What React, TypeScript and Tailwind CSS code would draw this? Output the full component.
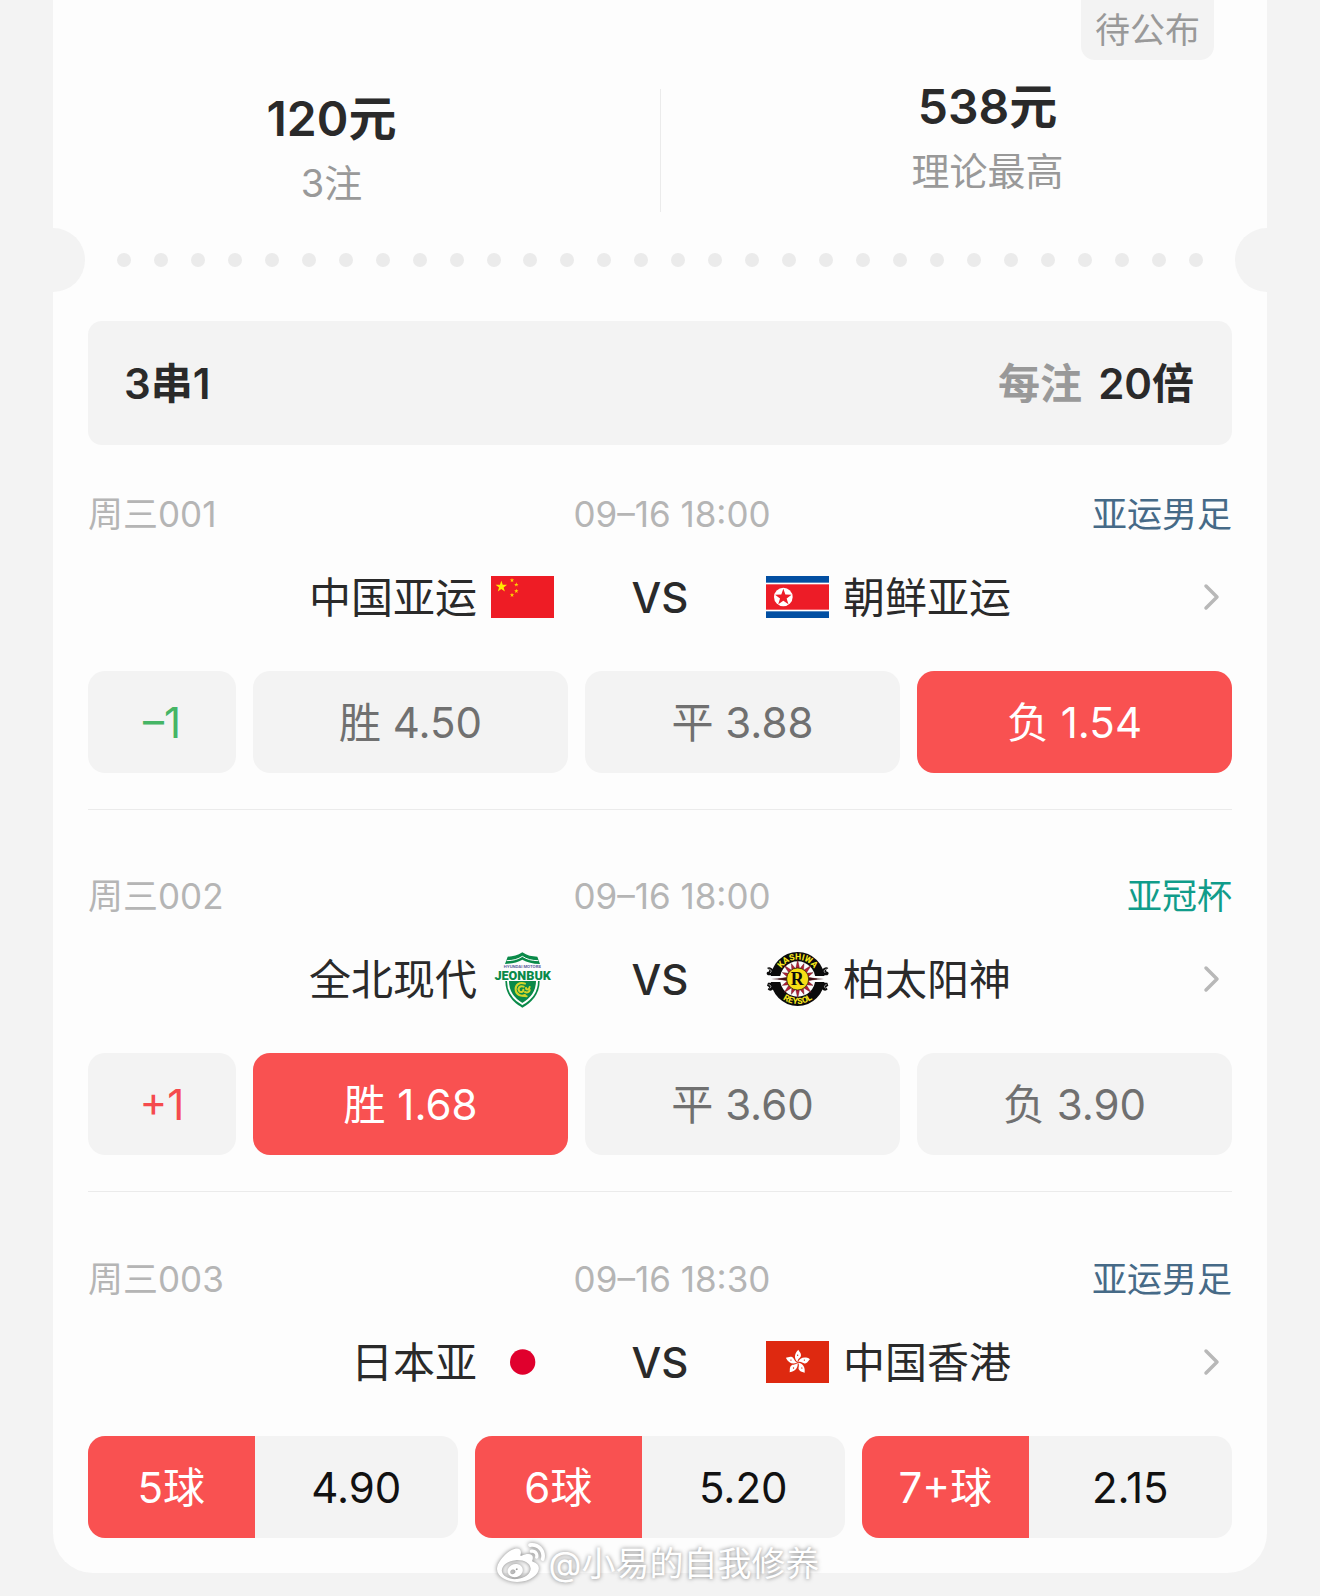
import type { ReactNode } from 'react';
import { FaWeibo } from 'react-icons/fa';
import clsx from 'clsx';

interface Team {
  name: string;
  logo: ReactNode;
}

interface Option {
  label: string;
  odds: string;
  selected?: boolean;
}

interface Match {
  id: string;
  time: string;
  league: string;
  leagueColor: string;
  home: Team;
  away: Team;
  handicap?: string;
  options: Option[];
}

function starPoints(cx: number, cy: number, r: number) {
  const points: string[] = [];
  for (let i = 0; i < 10; i++) {
    const radius = i % 2 === 0 ? r : r * 0.4;
    const angle = (Math.PI / 5) * i - Math.PI / 2;
    points.push(`${cx + radius * Math.cos(angle)},${cy + radius * Math.sin(angle)}`);
  }
  return points.join(' ');
}

function ChinaFlag() {
  return (
    <svg viewBox="0 0 189 126" className="h-[42px] w-[63px] shrink-0" aria-hidden="true">
      <rect width="189" height="126" fill="#ee1c25" />
      <polygon points={starPoints(31, 32, 18)} fill="#ffea00" />
      <polygon points={starPoints(63, 13, 7)} fill="#ffd400" />
      <polygon points={starPoints(76, 26, 7)} fill="#ffd400" />
      <polygon points={starPoints(76, 45, 7)} fill="#ffd400" />
      <polygon points={starPoints(63, 57, 7)} fill="#ffd400" />
    </svg>
  );
}

function NorthKoreaFlag() {
  return (
    <svg viewBox="0 0 189 126" className="h-[42px] w-[63px] shrink-0" aria-hidden="true">
      <rect width="189" height="126" fill="#024fa2" />
      <rect y="20" width="189" height="86" fill="#fff" />
      <rect y="25" width="189" height="76" fill="#ed1c27" />
      <circle cx="52" cy="63" r="28" fill="#fff" />
      <polygon points={starPoints(52, 64, 26)} fill="#ed1c27" />
    </svg>
  );
}

function JapanFlag() {
  return (
    <svg viewBox="0 0 189 126" className="h-[42px] w-[63px] shrink-0" aria-hidden="true">
      <rect width="189" height="126" fill="#fdfdfd" />
      <circle cx="95" cy="63" r="38" fill="#e0002d" />
    </svg>
  );
}

function HongKongFlag() {
  return (
    <svg viewBox="0 0 189 126" className="h-[42px] w-[63px] shrink-0" aria-hidden="true">
      <rect width="189" height="126" fill="#de2910" />
      {[8, 80, 152, 224, 296].map(angle => (
        <g key={angle} transform={`translate(95 64) rotate(${angle})`}>
          <path d="M0 -1C-12 -8 -15 -24 -3 -38C-1 -33 7 -30 7 -21C7 -14 -3 -10 0 -1Z" fill="#fff" />
          <circle cx="-3" cy="-21" r="2" fill="#de2910" />
        </g>
      ))}
    </svg>
  );
}

function JeonbukCrest() {
  return (
    <svg viewBox="33 25 189 189" className="size-[63px] shrink-0" aria-hidden="true">
      <path d="M127 38C113 48 99 51 83 51L75 73C96 72 113 68 127 60C141 68 158 72 180 73L172 51C156 51 141 48 127 38Z" fill="#0a8a49" />
      <path d="M80 63C99 63 114 59 127 50C140 59 156 63 175 63" fill="none" stroke="#fff" strokeWidth="3" />
      <text x="127" y="84" textAnchor="middle" fontSize="12" fontWeight="700" fill="#5b5c9b">HYUNDAI MOTORS</text>
      <path d="M76 124C76 165 101 190 127 204C153 190 179 165 179 124Z" fill="#0a8a49" />
      <path d="M84 124C84 160 104 180 127 193C150 180 171 160 171 124" fill="none" stroke="#fff" strokeWidth="6" />
      <text x="128" y="121" textAnchor="middle" fontSize="38" fontWeight="900" fill="#0a8a49" stroke="#fff" strokeWidth="4" paintOrder="stroke" className="font-['Roboto',sans-serif]">JEONBUK</text>
      <g fill="none" stroke="#d3d42a" strokeLinecap="round" strokeWidth="6">
        <path d="M135 132C119 125 105 136 107 151C109 166 124 171 135 166" />
        <path d="M131 141C119 137 113 146 117 153C121 160 131 158 130 150" />
        <path d="M138 145C137 151 148 151 149 142M135 157C142 160 148 157 149 151M129 168L140 170" />
      </g>
    </svg>
  );
}

function KashiwaCrest() {
  const rays = Array.from({ length: 16 }, (_, i) => i * 22.5);
  return (
    <svg viewBox="858 25 189 189" className="size-[63px] shrink-0" aria-hidden="true">
      <defs>
        <path id="crest-top" d="M895 118A58 58 0 0 1 1011 118" />
        <path id="crest-bottom" d="M878 118A75 75 0 0 0 1028 118" />
      </defs>
      <circle cx="953" cy="118" r="81" fill="#0b0b0b" />
      <circle cx="953" cy="118" r="53" fill="#fdfdfd" />
      <path d="M862 109L912 109L912 127L862 127ZM1044 109L994 109L994 127L1044 127Z" fill="#fdfdfd" />
      <g fill="#0b0b0b">
        <path d="M861 85C867 80 874 83 880 91L890 107L864 107C858 102 859 96 866 96L868 91Z" />
        <path d="M1045 85C1039 80 1032 83 1026 91L1016 107L1042 107C1048 102 1047 96 1040 96L1038 91Z" />
        <path d="M864 129L890 129L880 147C875 155 867 154 863 149L868 143L861 138Z" />
        <path d="M1042 129L1016 129L1026 147C1031 155 1039 154 1043 149L1038 143L1045 138Z" />
      </g>
      <g fill="none" stroke="#fdfdfd" strokeWidth="2">
        <path d="M866 88C874 90 876 95 870 100M866 135C873 136 875 142 869 146" />
        <path d="M1040 88C1032 90 1030 95 1036 100M1040 135C1033 136 1031 142 1037 146" />
      </g>
      {rays.map((angle, i) => (
        <path
          key={angle}
          d={i % 2 === 0 ? 'M-6 -31L0 -58L6 -31Z' : 'M-6 -31L0 -50L6 -31Z'}
          fill="#b51f35"
          stroke="#3c1014"
          strokeWidth="1"
          transform={`translate(953 118) rotate(${angle})`}
        />
      ))}
      <path d="M922 114L874 118L922 122ZM984 114L1032 118L984 122Z" fill="#3c1014" />
      <circle cx="953" cy="118" r="33" fill="#f7df16" stroke="#0b0b0b" strokeWidth="2" />
      <text x="952" y="136" textAnchor="middle" fontSize="54" fontWeight="700" fill="#0b0b0b" className="font-['Liberation_Serif',serif]">R</text>
      <g fill="#f7e61c" fontSize="26" fontWeight="800" className="font-['Roboto',sans-serif]">
        <text textAnchor="middle">
          <textPath href="#crest-top" startOffset="50%">KASHIWA</textPath>
        </text>
        <text textAnchor="middle">
          <textPath href="#crest-bottom" startOffset="50%">REYSOL</textPath>
        </text>
      </g>
    </svg>
  );
}

const matches: Match[] = [
  {
    id: '周三001',
    time: '09–16 18:00',
    league: '亚运男足',
    leagueColor: 'text-[#466a87]',
    home: { name: '中国亚运', logo: <ChinaFlag /> },
    away: { name: '朝鲜亚运', logo: <NorthKoreaFlag /> },
    handicap: '–1',
    options: [
      { label: '胜', odds: '4.50' },
      { label: '平', odds: '3.88' },
      { label: '负', odds: '1.54', selected: true },
    ],
  },
  {
    id: '周三002',
    time: '09–16 18:00',
    league: '亚冠杯',
    leagueColor: 'text-[#109c8a]',
    home: { name: '全北现代', logo: <JeonbukCrest /> },
    away: { name: '柏太阳神', logo: <KashiwaCrest /> },
    handicap: '+1',
    options: [
      { label: '胜', odds: '1.68', selected: true },
      { label: '平', odds: '3.60' },
      { label: '负', odds: '3.90' },
    ],
  },
  {
    id: '周三003',
    time: '09–16 18:30',
    league: '亚运男足',
    leagueColor: 'text-[#466a87]',
    home: { name: '日本亚', logo: <JapanFlag /> },
    away: { name: '中国香港', logo: <HongKongFlag /> },
    options: [
      { label: '5球', odds: '4.90' },
      { label: '6球', odds: '5.20' },
      { label: '7+球', odds: '2.15' },
    ],
  },
];

function Summary() {
  return (
    <div className="relative grid grid-cols-2">
      <div className="mt-[89px] flex h-[123px] flex-col items-center pr-[50px] text-center">
        <p className="text-[48px] leading-[60px] font-semibold text-[#2a2a2a]">120元</p>
        <p className="mt-2 text-[38px] leading-[52px] text-[#999]">3注</p>
      </div>
      <div className="mt-[77px] flex flex-col items-center pl-12 text-center">
        <p className="text-[48px] leading-[60px] font-semibold text-[#2a2a2a]">538元</p>
        <p className="mt-2 text-[38px] leading-[52px] text-[#999]">理论最高</p>
      </div>
      <div className="absolute top-[89px] left-1/2 h-[123px] w-px bg-[#ebebeb]" />
      <span className="absolute top-0 right-[53px] rounded-b-[14px] bg-[#f3f3f3] px-[14px] text-[35px] leading-[60px] text-[#999]">
        待公布
      </span>
    </div>
  );
}

// Tear line between the stub and the ticket body
function TearLine() {
  return (
    <div className="mt-4 flex h-16 items-center justify-between overflow-hidden">
      <div className="h-16 w-8 rounded-r-full bg-[#f3f3f3]" />
      <div className="flex flex-1 justify-between px-8">
        {Array.from({ length: 30 }, (_, i) => (
          <span key={i} className="size-[14px] rounded-full bg-[#ebebeb]" />
        ))}
      </div>
      <div className="h-16 w-8 rounded-l-full bg-[#f3f3f3]" />
    </div>
  );
}

function HandicapOptions({ match }: { match: Match }) {
  return (
    <div className="flex gap-[17px] text-[42px]">
      <div
        className={clsx(
          'flex h-[102px] w-[148px] items-center justify-center rounded-[17px] bg-[#f3f3f3]',
          match.handicap === '+1' ? 'text-[#f54a4d]' : 'text-[#45b565]'
        )}
      >
        {match.handicap}
      </div>
      {match.options.map(option => (
        <button
          key={option.label}
          type="button"
          aria-pressed={!!option.selected}
          className={clsx(
            'h-[102px] flex-1 rounded-[17px]',
            option.selected ? 'bg-[#f95151] text-white' : 'bg-[#f3f3f3] text-[#707070]'
          )}
        >
          {option.label} {option.odds}
        </button>
      ))}
    </div>
  );
}

function GoalOptions({ options }: { options: Option[] }) {
  return (
    <div className="grid grid-cols-3 gap-[17px] text-[42px]">
      {options.map(option => (
        <button key={option.label} type="button" className="flex h-[102px] overflow-hidden rounded-[17px] bg-[#f3f3f3]">
          <span className="flex h-full w-[45%] items-center justify-center bg-[#f95151] text-white">
            {option.label}
          </span>
          <span className="flex h-full flex-1 items-center justify-center text-[#111]">{option.odds}</span>
        </button>
      ))}
    </div>
  );
}

function MatchItem({ match }: { match: Match }) {
  return (
    <article className="border-b border-[#ebebeb] pt-[60px] pb-9 first:pt-[43px] last:border-b-0 last:pt-[61px] last:pb-[35px]">
      <div className="grid grid-cols-3 text-[35px] leading-[52px] text-[#b5b5b5]">
        <span>{match.id}</span>
        <time className="pl-6 text-center">{match.time}</time>
        <span className={clsx('text-right', match.leagueColor)}>{match.league}</span>
      </div>

      <div className="mt-[25px] flex h-16 items-center text-[42px] text-[#2a2a2a]">
        <div className="flex flex-1 items-center justify-end gap-[14px]">
          <span>{match.home.name}</span>
          {match.home.logo}
        </div>
        <span className="w-[212px] text-center font-medium">VS</span>
        <div className="flex flex-1 items-center gap-[14px]">
          {match.away.logo}
          <span>{match.away.name}</span>
          <a href="#detail" aria-label="详情" className="mr-3 ml-auto">
            <svg viewBox="0 0 18 32" className="h-8 w-[18px]" fill="none" stroke="#b8b8b8" strokeWidth="3.5" strokeLinecap="round" strokeLinejoin="round">
              <path d="M4 5L15 16L4 27" />
            </svg>
          </a>
        </div>
      </div>

      <div className="mt-[42px]">
        {match.handicap ? <HandicapOptions match={match} /> : <GoalOptions options={match.options} />}
      </div>
    </article>
  );
}

export default function App() {
  return (
    <div className="relative min-h-screen bg-[#f3f3f3] px-[53px] pb-[23px] font-['Inter','Noto_Sans_CJK_SC',sans-serif]">
      <main className="rounded-b-[40px] bg-[#fdfdfd]">
        <Summary />
        <TearLine />

        <div className="px-[35px] pt-[29px]">
          <div className="flex h-[124px] items-center justify-between rounded-[14px] bg-[#f3f3f3] pr-[38px] pl-9 text-[42px] font-semibold text-[#2a2a2a]">
            <h2>3串1</h2>
            <p className="flex gap-4">
              <span className="text-[#999]">每注</span>
              <span>20倍</span>
            </p>
          </div>

          <section>
            {matches.map(match => (
              <MatchItem key={match.id} match={match} />
            ))}
          </section>
        </div>
      </main>

      {/* Watermark */}
      <div className="absolute inset-x-0 bottom-2 flex items-center justify-center gap-1 pr-1 text-[34px] leading-[48px] text-white">
        <FaWeibo className="size-12 drop-shadow-[0_0_2px_rgba(0,0,0,0.5)]" />
        <span className="[text-shadow:0_0_4px_rgba(0,0,0,0.5)]">@小易的自我修养</span>
      </div>
    </div>
  );
}
